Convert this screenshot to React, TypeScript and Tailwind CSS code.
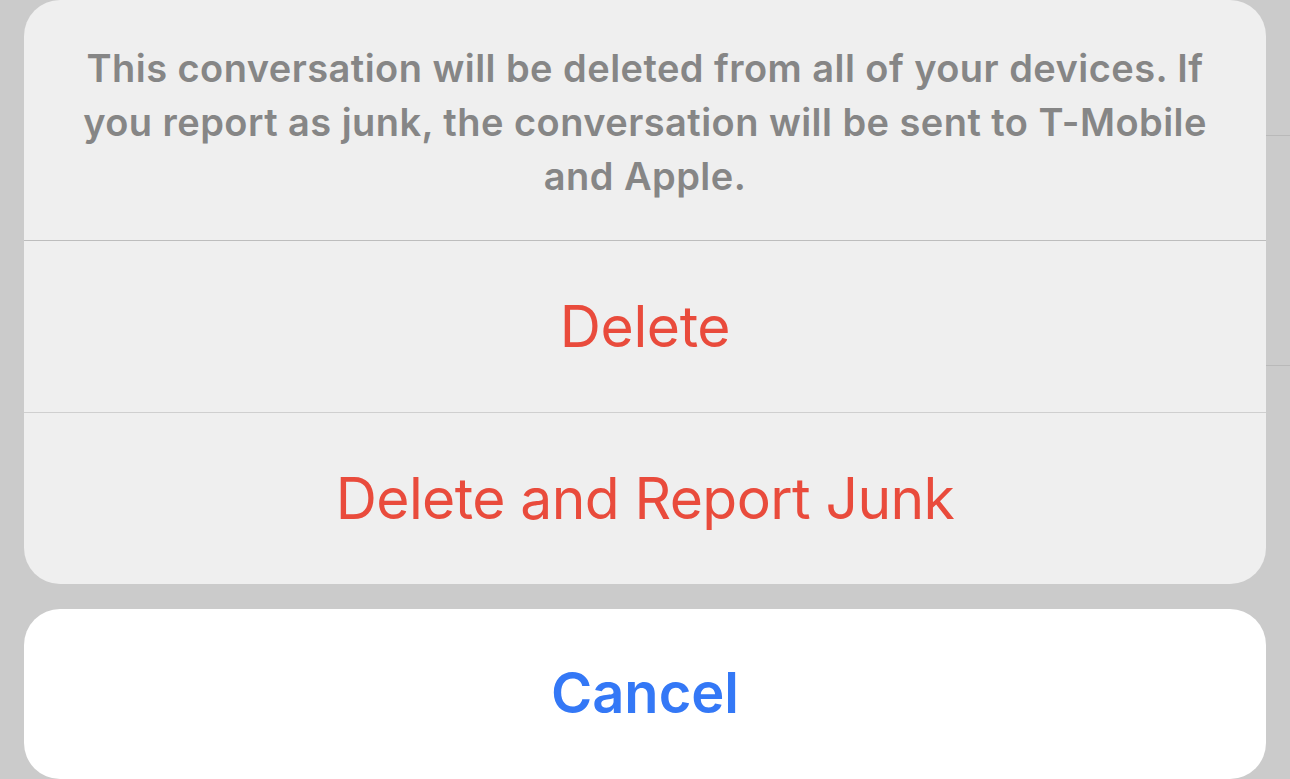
export default function App() {
  return (
    <div className="relative h-[779px] w-[1290px] overflow-hidden bg-[#cbcbcb] font-['Inter',sans-serif]">
      {/* underlying list lines peeking out at the right */}
      <div className="absolute right-0 top-[135px] h-px w-[24px] bg-[#b9b9b9]" />
      <div className="absolute right-0 top-[365px] h-px w-[24px] bg-[#b9b9b9]" />

      <div className="flex flex-col gap-[25px] px-[24px]">
        <div className="flex flex-col overflow-hidden rounded-[36px] bg-[#efefef]">
          <div className="flex h-[240px] items-center justify-center px-[48px] pt-[4px]">
            <p className="text-center text-[38px] font-semibold leading-[54px] tracking-[0.45px] text-[#868686]">
              This conversation will be deleted from all of your devices. If you report as junk, the conversation will be sent to T-Mobile and Apple.
            </p>
          </div>
          <div className="h-px bg-[#bdbdbd]" />
          <button className="flex h-[171px] items-center justify-center text-[57px] font-normal tracking-[-0.4px] text-[#e94b3c]">
            Delete
          </button>
          <div className="h-px bg-[#cfcfcf]" />
          <button className="flex h-[171px] items-center justify-center text-[57px] font-normal tracking-[-0.6px] text-[#e94b3c]">
            Delete and Report Junk
          </button>
        </div>

        <button className="flex h-[170px] items-start justify-center rounded-[36px] bg-white pt-[42px] text-[56px] font-semibold text-[#3478f6]">
          Cancel
        </button>
      </div>
    </div>
  );
}
